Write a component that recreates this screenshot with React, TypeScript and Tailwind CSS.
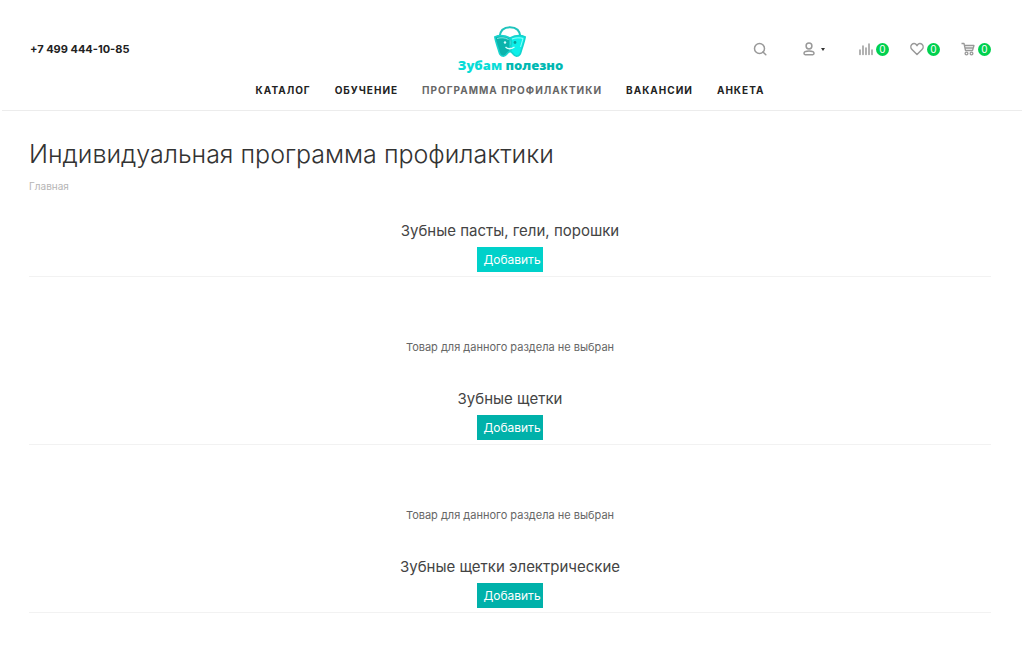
type Section = {
  title: string;
  buttonClass: string;
  message?: string;
};

const emptyMessage = "Товар для данного раздела не выбран";

const menu = [
  { title: "Каталог" },
  { title: "Обучение" },
  { title: "Программа профилактики", active: true },
  { title: "Вакансии" },
  { title: "Анкета" },
];

const sections: Section[] = [
  {
    title: "Зубные пасты, гели, порошки",
    buttonClass: "bg-[#00d1ca]",
    message: emptyMessage,
  },
  {
    title: "Зубные щетки",
    buttonClass: "bg-[#00b1aa]",
    message: emptyMessage,
  },
  { title: "Зубные щетки электрические", buttonClass: "bg-[#00b1aa]" },
];

const Logo = () => (
  <a href="#" className="flex flex-col items-center">
    <svg width="34" height="32" viewBox="0 0 34 32" fill="none">
      <path
        d="M6.500 12C7 5.500 11 2.200 17 2.200S27 5.500 27.500 12"
        stroke="#1fc4bd"
        strokeWidth="2"
      />
      <path
        d="M1.800 12C6 10 12 10.500 17 13V26.500C14.500 26.500 13.500 31.200 10.500 31.200C7 31.200 6.500 28.500 5.500 25C4.500 21.500 2.500 16.500 1.800 12Z"
        fill="#0bb3ac"
        stroke="#19d3cd"
        strokeWidth="1.6"
      />
      <path
        d="M17 13C22 10.500 28 10 32.200 12C31.500 16.500 29.500 21.500 28.500 25C27.500 28.500 27 31.200 23.500 31.200C20.500 31.200 19.500 26.500 17 26.500C19 24 19 22.500 17.500 21C20 18 18.500 15.500 17 13Z"
        fill="#0df0ea"
        stroke="#12d4ce"
        strokeWidth="1.6"
      />
      <path
        d="M4 13.500C8 12.300 12 12.500 15.500 14.500"
        stroke="#9af5f1"
        strokeWidth="0.8"
      />
      <path
        d="M19 14C23 12.500 27 12.500 30 13.500L27.500 22"
        stroke="#b8fffc"
        strokeWidth="0.8"
      />
      <path
        d="M12.500 22C14.500 24 18 24.300 21.500 22"
        stroke="#d8fffd"
        strokeWidth="1.3"
      />
      <circle cx="12" cy="17.500" r="1.2" fill="#d8fffd" />
      <circle cx="22" cy="17.500" r="1.4" fill="#079d97" />
    </svg>
    <span className="font-['Open_Sans',sans-serif] text-[13px] leading-4 font-extrabold whitespace-nowrap text-[#00b8b2]">
      <span className="text-[#08dcd7]">Зубам</span> полезно
    </span>
  </a>
);

const SearchIcon = () => (
  <svg width="14" height="14" viewBox="0 0 14 14" fill="none" stroke="#999999" strokeWidth="1.5">
    <circle cx="6.500" cy="6.500" r="5" />
    <path d="M10 10L12.800 12.800" strokeLinecap="round" />
  </svg>
);

const UserIcon = () => (
  <svg width="12" height="14" viewBox="0 0 12 14" fill="none" stroke="#999999" strokeWidth="1.5">
    <circle cx="6" cy="4" r="2.900" />
    <path d="M1 11.300C1 9.800 3 9 6 9S11 9.800 11 11.300C11 12.400 10.500 12.700 9.800 12.700H2.200C1.500 12.700 1 12.400 1 11.300Z" />
  </svg>
);

const CompareIcon = () => (
  <svg width="14" height="14" viewBox="0 0 14 14" fill="none" stroke="#999999" strokeWidth="1.5" strokeLinecap="round">
    <path d="M1 8V12.500M4 4V12.500M7 6V12.500M10 2V12.500M13 8V12.500" />
  </svg>
);

const HeartIcon = () => (
  <svg width="14" height="14" viewBox="0 0 14 14" fill="none" stroke="#999999" strokeWidth="1.5">
    <path
      d="M7 12.500L2 7.500C0.500 6 0.600 3.700 1.800 2.500C3.200 1.200 5.300 1.300 6.400 2.800L7 3.600L7.600 2.800C8.700 1.300 10.800 1.200 12.200 2.500C13.400 3.700 13.500 6 12 7.500Z"
      strokeLinejoin="round"
    />
  </svg>
);

const CartIcon = () => (
  <svg width="14" height="14" viewBox="0 0 14 14" fill="none" stroke="#999999" strokeWidth="1.3">
    <path d="M0.500 1.500H3L4.500 8.500H11.500L13 3.500H3.500M4 6H12" strokeLinejoin="round" />
    <circle cx="5.500" cy="11.500" r="1.400" />
    <circle cx="10.500" cy="11.500" r="1.400" />
  </svg>
);

const Badge = () => (
  <span className="flex size-[13px] items-center justify-center rounded-full bg-[#00d14f] text-[10px] leading-none text-white">
    0
  </span>
);

const App = () => {
  return (
    <div className="min-h-screen bg-white font-[Inter,sans-serif] text-[#333333]">
      <header className="mx-0.5 border-b border-[#ececec] pt-[25px]">
        <div className="grid h-12 grid-cols-[1fr_auto_1fr] items-center pr-[31px] pl-7">
          <a href="tel:+74994441085" className="text-[11px] font-bold text-[#222222]">
            +7 499 444-10-85
          </a>
          <Logo />
          <div className="flex items-center justify-end">
            <button aria-label="Поиск" className="mr-9">
              <SearchIcon />
            </button>
            <button aria-label="Кабинет" className="mr-[34px] flex items-center gap-1.5">
              <UserIcon />
              <svg width="4" height="3" viewBox="0 0 4 3">
                <path d="M0 0H4L2 3Z" fill="#333333" />
              </svg>
            </button>
            <div className="flex items-center gap-[21px]">
              <a href="#" aria-label="Сравнение" className="flex items-center gap-[3px]">
                <CompareIcon />
                <Badge />
              </a>
              <a href="#" aria-label="Избранное" className="flex items-center gap-[3px]">
                <HeartIcon />
                <Badge />
              </a>
              <a href="#" aria-label="Корзина" className="flex items-center gap-[3px]">
                <CartIcon />
                <Badge />
              </a>
            </div>
          </div>
        </div>
        <nav className="flex items-center justify-center gap-6 pt-[9px] pr-1 pb-3">
          {menu.map((item) => (
            <a
              key={item.title}
              href="#"
              className={`text-[10px] leading-4 font-bold tracking-widest whitespace-nowrap uppercase ${
                item.active ? "text-[#666666]" : "text-[#222222]"
              }`}
            >
              {item.title}
            </a>
          ))}
        </nav>
      </header>

      <main className="pr-[33px] pl-[29px]">
        <h1 className="pt-[27px] text-[25px] leading-8 font-light">
          Индивидуальная программа профилактики
        </h1>
        <div className="pt-2">
          <a href="#" className="block text-[10px] leading-4 text-[#b6b5b5]">
            Главная
          </a>
        </div>
        <div className="flex flex-col gap-8 pt-[27px]">
          {sections.map((section) => (
            <section key={section.title} className="text-center">
              <div className="border-b border-[#f2f2f2] pb-1">
                <h2 className="pb-1.5 text-[15px] leading-5 text-[#444444]">{section.title}</h2>
                <button
                  className={`mx-auto block h-[25px] cursor-pointer pr-0.5 pl-1.5 text-xs text-white ${section.buttonClass}`}
                >
                  Добавить
                </button>
              </div>
              {section.message && (
                <p className="pt-[62px] pb-0.5 text-[11px] leading-4 text-[#666666]">
                  {section.message}
                </p>
              )}
            </section>
          ))}
        </div>
      </main>
    </div>
  );
};

export default App;
